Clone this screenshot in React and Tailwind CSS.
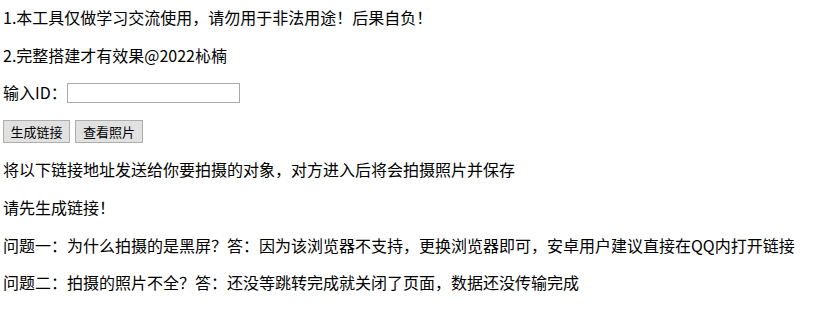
export default function App() {
  const font = { fontFamily: '"Noto Sans CJK SC", "Noto Sans", sans-serif' };
  return (
    <div
      className="flex flex-col gap-[16px] pt-[7px] px-[3px] text-[16px] leading-[21.7px] text-black bg-white min-h-[330px]"
      style={font}
    >
      <p>1.本工具仅做学习交流使用，请勿用于非法用途！后果自负！</p>
      <p>2.完整搭建才有效果@2022杺楠</p>
      <p className="flex items-center">
        输入ID：
        <input
          type="text"
          className="w-[173px] h-[20px] border border-[#a9a9a9] bg-white outline-none"
        />
      </p>
      <p className="flex items-center gap-[5px]">
        <button className="w-[67px] h-[23px] text-[13px] leading-[21px] border border-[#adadad] bg-[#e1e1e1]">
          生成链接
        </button>
        <button className="w-[68px] h-[23px] text-[13px] leading-[21px] border border-[#adadad] bg-[#e1e1e1]">
          查看照片
        </button>
      </p>
      <p>将以下链接地址发送给你要拍摄的对象，对方进入后将会拍摄照片并保存</p>
      <p>请先生成链接！</p>
      <p>问题一：为什么拍摄的是黑屏？答：因为该浏览器不支持，更换浏览器即可，安卓用户建议直接在QQ内打开链接</p>
      <p>问题二：拍摄的照片不全？答：还没等跳转完成就关闭了页面，数据还没传输完成</p>
    </div>
  );
}
